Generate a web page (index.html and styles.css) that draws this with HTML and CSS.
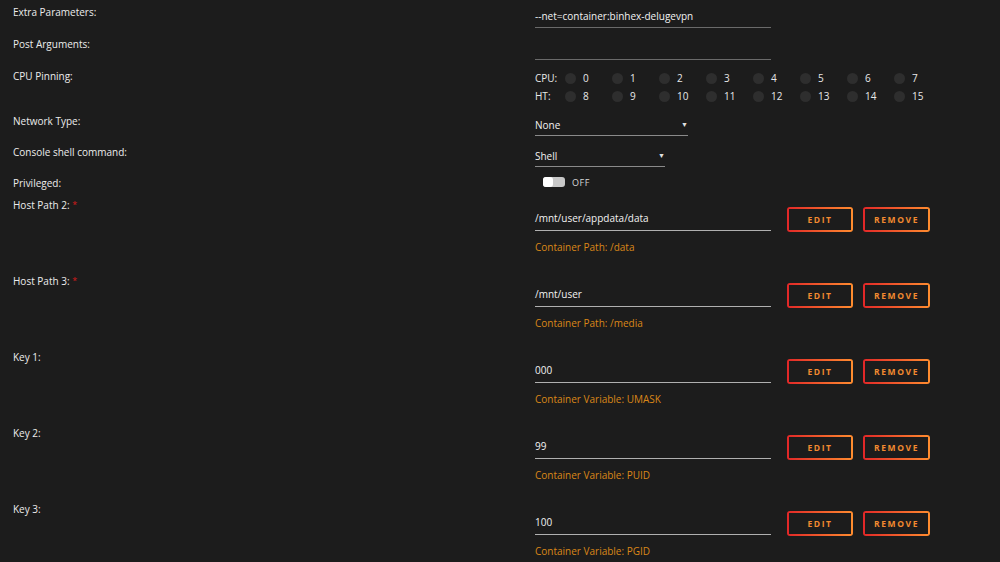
FILE: index.html
```html
<!DOCTYPE html>
<html>
  <head>
    <title>Docker Container Settings</title>
    <meta charset="utf-8">
    <link rel="stylesheet" href="styles.css">
  </head>
  <body>
    <main class="form">
      <div class="row">
        <div class="label">Extra Parameters:</div>
        <div class="value"><div class="field dim">--net=container:binhex-delugevpn</div></div>
      </div>
      <div class="row">
        <div class="label">Post Arguments:</div>
        <div class="value"><div class="field dim"></div></div>
      </div>
      <div class="row cpu-row">
        <div class="label">CPU Pinning:</div>
        <div class="value">
          <div class="cpus">
            <span class="cpu-head">CPU:</span>
            <span class="cpu"><i></i>0</span><span class="cpu"><i></i>1</span><span class="cpu"><i></i>2</span><span class="cpu"><i></i>3</span>
            <span class="cpu"><i></i>4</span><span class="cpu"><i></i>5</span><span class="cpu"><i></i>6</span><span class="cpu"><i></i>7</span>
          </div>
          <div class="cpus">
            <span class="cpu-head">HT:</span>
            <span class="cpu"><i></i>8</span><span class="cpu"><i></i>9</span><span class="cpu"><i></i>10</span><span class="cpu"><i></i>11</span>
            <span class="cpu"><i></i>12</span><span class="cpu"><i></i>13</span><span class="cpu"><i></i>14</span><span class="cpu"><i></i>15</span>
          </div>
        </div>
      </div>
      <div class="row net-row">
        <div class="label">Network Type:</div>
        <div class="value"><div class="field select wide">None<span class="caret">&#9660;</span></div></div>
      </div>
      <div class="row shell-row">
        <div class="label">Console shell command:</div>
        <div class="value"><div class="field select narrow">Shell<span class="caret">&#9660;</span></div></div>
      </div>
      <div class="row toggle-row">
        <div class="label">Privileged:</div>
        <div class="value"><span class="switch"><span class="knob"></span></span><span class="switch-text">OFF</span></div>
      </div>

      <div class="row entry">
        <div class="label">Host Path 2: <span class="req">*</span></div>
        <div class="value">
          <div class="line"><div class="field lit">/mnt/user/appdata/data</div><button>EDIT</button><button>REMOVE</button></div>
          <div class="hint">Container Path: /data</div>
        </div>
      </div>
      <div class="row entry">
        <div class="label">Host Path 3: <span class="req">*</span></div>
        <div class="value">
          <div class="line"><div class="field lit">/mnt/user</div><button>EDIT</button><button>REMOVE</button></div>
          <div class="hint">Container Path: /media</div>
        </div>
      </div>
      <div class="row entry">
        <div class="label">Key 1:</div>
        <div class="value">
          <div class="line"><div class="field lit">000</div><button>EDIT</button><button>REMOVE</button></div>
          <div class="hint">Container Variable: UMASK</div>
        </div>
      </div>
      <div class="row entry">
        <div class="label">Key 2:</div>
        <div class="value">
          <div class="line"><div class="field lit">99</div><button>EDIT</button><button>REMOVE</button></div>
          <div class="hint">Container Variable: PUID</div>
        </div>
      </div>
      <div class="row entry">
        <div class="label">Key 3:</div>
        <div class="value">
          <div class="line"><div class="field lit">100</div><button>EDIT</button><button>REMOVE</button></div>
          <div class="hint">Container Variable: PGID</div>
        </div>
      </div>
    </main>
  </body>
</html>
```

FILE: styles.css
```css
html, body {
  margin: 0;
  height: 100%;
  background-color: #1c1c1c;
  color: #e8e8e8;
  font-family: "Open Sans", "Noto Sans", sans-serif;
  font-size: 10px;
  overflow: hidden;
}
.form {
  padding: 0 0 0 13px;
}
.row {
  display: grid;
  grid-template-columns: 522px 1fr;
  height: 32px;
}
.label {
  padding-top: 5px;
  line-height: 14px;
  color: #ececec;
}
.value {
  padding-top: 5px;
}
.field {
  box-sizing: border-box;
  width: 236px;
  height: 23px;
  line-height: 22px;
  border-bottom: 1px solid #666;
  color: #f2f2f2;
}
.field.dim {
  border-bottom-color: #6a6a6a;
}
.field.lit {
  height: 24px;
  line-height: 23px;
  border-bottom-color: #b0b0b0;
}
.field.select {
  position: relative;
  height: 22px;
  border-bottom-color: #8a8a8a;
}
.field.wide {
  width: 153px;
}
.field.narrow {
  width: 130px;
}
.caret {
  position: absolute;
  right: 0;
  top: 0;
  font-size: 7px;
  color: #e0e0e0;
}

/* cpu pinning */
.cpu-row {
  height: 45px;
}
.cpu-row .value {
  padding-top: 5px;
}
.cpus {
  display: flex;
  align-items: center;
  height: 18px;
}
.cpu-head {
  width: 30px;
}
.cpu {
  display: flex;
  align-items: center;
  width: 47px;
}
.cpu i {
  display: block;
  width: 11px;
  height: 11px;
  border-radius: 50%;
  background-color: #2e2e2e;
  margin-right: 7px;
}

.net-row {
  height: 31px;
}
.shell-row {
  height: 31px;
}

/* privileged toggle */
.toggle-row {
  height: 22px;
}
.toggle-row .value {
  display: flex;
  align-items: center;
  height: 14px;
  padding-top: 4px;
  padding-left: 8px;
}
.switch {
  display: inline-block;
  width: 22px;
  height: 10px;
  border-radius: 3px;
  background-color: #c8c8c8;
  position: relative;
}
.knob {
  position: absolute;
  left: 0;
  top: 0;
  width: 10px;
  height: 10px;
  border-radius: 3px;
  background-color: #fff;
}
.switch-text {
  margin-left: 7px;
  font-size: 9px;
  color: #d8d8d8;
  letter-spacing: 0.5px;
}

/* path and variable entries */
.entry {
  height: 76px;
}
.entry .value {
  padding-top: 14px;
}
.line {
  display: flex;
  align-items: flex-start;
}
.req {
  color: #d41b1b;
  font-size: 9px;
  vertical-align: top;
}
button {
  box-sizing: border-box;
  height: 25px;
  margin-left: 16px;
  padding: 0;
  border: 0;
  border-radius: 3px;
  background:
    linear-gradient(90deg, #e22828, #ff8c2f) 0 0 / 100% 2px no-repeat,
    linear-gradient(90deg, #e22828, #ff8c2f) 0 100% / 100% 2px no-repeat,
    linear-gradient(#e22828, #e22828) 0 0 / 2px 100% no-repeat,
    linear-gradient(#ff8c2f, #ff8c2f) 100% 0 / 2px 100% no-repeat,
    #1c1c1c;
  color: #f28a30;
  font-family: "Open Sans", sans-serif;
  font-size: 8.5px;
  font-weight: bold;
  letter-spacing: 1.6px;
  width: 66px;
}
button + button {
  margin-left: 10px;
  width: 67px;
}
.hint {
  margin-top: 8px;
  line-height: 14px;
  color: #da8718;
}
```
